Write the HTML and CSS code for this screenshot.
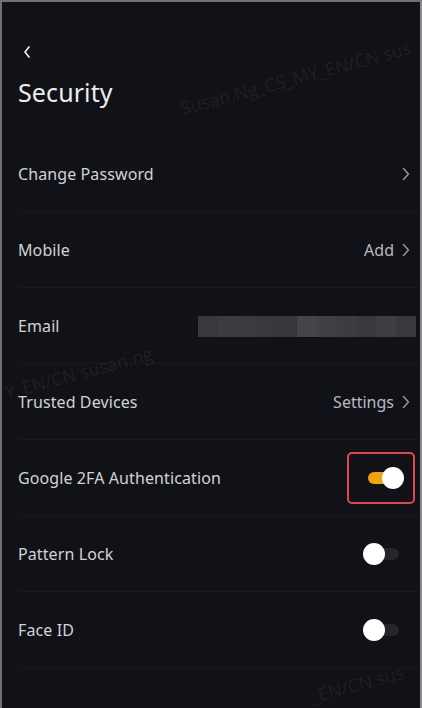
FILE: index.html
```html
<!DOCTYPE html>
<html>
<head>
<meta charset="utf-8">
<link rel="stylesheet" href="styles.css">
</head>
<body>
<div class="frame">
  <header class="head">
    <div class="back">
      <svg width="10" height="14" viewBox="0 0 10 14"><path d="M7 2 L3 7 L7 12" fill="none" stroke="#e6e6e6" stroke-width="1.8" stroke-linecap="round" stroke-linejoin="round"/></svg>
    </div>
    <h1 class="title">Security</h1>
  </header>
  <ul class="list">
    <li class="row"><span class="label">Change Password</span><span class="right"><svg class="chev" width="8" height="14" viewBox="0 0 8 14"><path d="M1.5 1.5 L6.5 7 L1.5 12.5" fill="none" stroke="#9a9ba0" stroke-width="1.4" stroke-linecap="round" stroke-linejoin="round"/></svg></span></li>
    <li class="row"><span class="label">Mobile</span><span class="right"><span class="val">Add</span><svg class="chev" width="8" height="14" viewBox="0 0 8 14"><path d="M1.5 1.5 L6.5 7 L1.5 12.5" fill="none" stroke="#9a9ba0" stroke-width="1.4" stroke-linecap="round" stroke-linejoin="round"/></svg></span></li>
    <li class="row row-email"><span class="label">Email</span><span class="blur"><i></i><i></i><i></i><i></i><i></i><i></i><i></i><i></i><i></i><i></i><i></i></span></li>
    <li class="row"><span class="label">Trusted Devices</span><span class="right"><span class="val">Settings</span><svg class="chev" width="8" height="14" viewBox="0 0 8 14"><path d="M1.5 1.5 L6.5 7 L1.5 12.5" fill="none" stroke="#9a9ba0" stroke-width="1.4" stroke-linecap="round" stroke-linejoin="round"/></svg></span></li>
    <li class="row"><span class="label">Google 2FA Authentication</span><span class="hl"><span class="toggle on"><span class="knob"></span></span></span></li>
    <li class="row"><span class="label">Pattern Lock</span><span class="right tg"><span class="toggle off"><span class="knob"></span></span></span></li>
    <li class="row"><span class="label">Face ID</span><span class="right tg"><span class="toggle off"><span class="knob"></span></span></span></li>
  </ul>
  <div class="wm wm1">Susan.Ng_CS_MY_EN/CN sus</div>
  <div class="wm wm2">Y_EN/CN susan.ng</div>
  <div class="wm wm3">_EN/CN sus</div>
</div>
</body>
</html>
```
FILE: styles.css
```css
* { box-sizing: border-box; margin: 0; padding: 0; }
html, body { width: 422px; height: 708px; overflow: hidden; }
body { background: #111217; font-family: "Noto Sans", "Open Sans", sans-serif; color: #dcdcde; }
.frame {
  position: relative;
  width: 422px;
  height: 708px;
  background: #111217;
  border-left: 2px solid #6f7074;
  border-top: 2px solid #6f7074;
  border-right: 2px solid #8a8b8e;
  overflow: hidden;
}
.head { height: 134px; padding-left: 16px; }
.back { padding-top: 40px; height: 70px; padding-left: 4px; }
.title { font-size: 25px; font-weight: 400; color: #ececee; line-height: 40px; letter-spacing: 0.1px; }
.list { list-style: none; padding-left: 16px; }
.row {
  height: 76px;
  display: flex;
  align-items: center;
  justify-content: space-between;
  border-bottom: 1px solid #18191e;
  padding-right: 10px;
}
.label { font-size: 16px; color: #d2d2d5; letter-spacing: 0.1px; }
.right { display: flex; align-items: center; gap: 8px; }
.val { font-size: 16px; color: #b9babd; }
.chev { display: block; }
.row-email { padding-right: 4px; }
.blur { display: flex; width: 218px; height: 21px; margin-top: 2px; }
.blur i { flex: 1; background: #38393e; }
.blur i:nth-child(2) { background: #3b3c41; }
.blur i:nth-child(3) { background: #3a3b40; }
.blur i:nth-child(5) { background: #37383d; }
.blur i:nth-child(6) { background: #44454a; }
.blur i:nth-child(7) { background: #404146; }
.blur i:nth-child(8) { background: #3c3d42; }
.blur i:nth-child(10) { background: #3d3e43; }
.hl {
  width: 68px;
  height: 52px;
  border: 2.5px solid #e0474c;
  border-radius: 5px;
  display: flex;
  align-items: center;
  justify-content: center;
  margin-right: -5px;
  padding-left: 4px;
}
.toggle { position: relative; display: block; width: 38px; height: 20px; }
.toggle::before {
  content: "";
  position: absolute;
  left: 4px; right: 2px; top: 4px; height: 12px;
  border-radius: 6px;
}
.toggle.on::before { background: #f0a30a; }
.toggle.off::before { background: #24252a; }
.knob {
  position: absolute;
  top: -1px;
  width: 22px; height: 22px;
  border-radius: 50%;
  background: #ffffff;
}
.toggle.on .knob { right: -2px; }
.toggle.off .knob { left: 0; }
.tg { margin-right: 9px; }
.wm {
  position: absolute;
  font-family: "Open Sans", sans-serif;
  font-size: 18px;
  color: rgba(255,255,255,0.07);
  white-space: nowrap;
  transform: rotate(-15deg);
  transform-origin: left bottom;
  pointer-events: none;
}
.wm1 { left: 182px; top: 94px; }
.wm2 { left: 6px; top: 378px; }
.wm3 { left: 312px; top: 682px; }
```
